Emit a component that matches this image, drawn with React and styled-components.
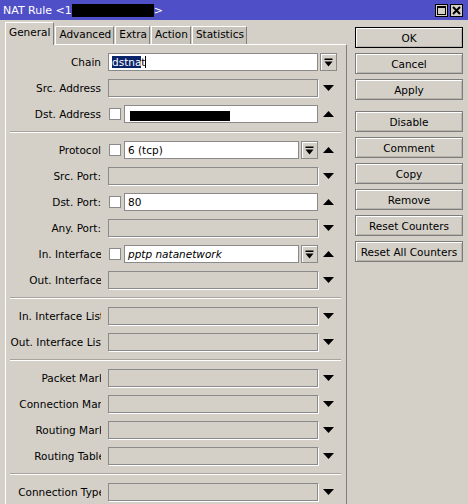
import React from "react";
import styled, { createGlobalStyle } from "styled-components";

const GlobalStyle = createGlobalStyle`
  html, body {
    margin: 0;
    padding: 0;
    background: #d4d0c8;
  }
  * {
    box-sizing: border-box;
  }
`;

const Window = styled.div`
  width: 468px;
  height: 504px;
  overflow: hidden;
  background: #d4d0c8;
  font-family: "DejaVu Sans", "Liberation Sans", sans-serif;
  font-size: 10.5px;
  color: #000;
  display: flex;
  flex-direction: column;
`;

const TitleBar = styled.div`
  height: 20px;
  flex: none;
  background: #4f4fc7;
  color: #fff;
  font-size: 11px;
  display: flex;
  align-items: center;
  padding: 0 4px 0 3px;
`;

const TitleText = styled.div`
  flex: 1;
  display: flex;
  align-items: center;
  white-space: nowrap;
`;

const Redact = styled.span`
  display: inline-block;
  background: #000;
  width: ${(p) => p.$w}px;
  height: ${(p) => p.$h}px;
`;

const TitleButtons = styled.div`
  display: flex;
  gap: 2px;
  margin-right: 1px;
`;

const TitleButton = styled.div`
  width: 13px;
  height: 13px;
  background: #d4d0c8;
  border: 1px solid #000;
  display: flex;
  align-items: center;
  justify-content: center;
`;

const Body = styled.div`
  flex: 1;
  display: flex;
  min-height: 0;
`;

const Left = styled.div`
  width: 347px;
  padding: 2px 0 0 5px;
  display: flex;
  flex-direction: column;
`;

const Tabs = styled.div`
  display: flex;
  align-items: flex-end;
  height: 22px;
  position: relative;
  z-index: 1;
`;

const Tab = styled.div`
  height: ${(p) => (p.$active ? 23 : 18)}px;
  margin-bottom: ${(p) => (p.$active ? -1 : 0)}px;
  padding: ${(p) => (p.$active ? "3px 3px 0 3px" : "1px 2px 0 3px")};
  background: ${(p) => (p.$active ? "#d4d0c8" : "#c8c4bc")};
  border-top: 1px solid #fff;
  border-left: 1px solid #fff;
  border-right: 1px solid #808080;
  margin-right: 1px;
  white-space: nowrap;
  display: flex;
  align-items: flex-start;
`;

const Panel = styled.div`
  flex: 1;
  border-top: 1px solid #fff;
  border-left: 1px solid #fff;
  border-right: 1px solid #808080;
  padding: 8px 5px 0 3px;
`;

const Row = styled.div`
  display: flex;
  align-items: center;
  height: 18px;
  margin-bottom: 8px;
`;

/* labels are right-aligned and clipped at the box edge, long ones run past it */
const Label = styled.div`
  width: 92px;
  margin-right: 7px;
  display: flex;
  justify-content: flex-end;
  overflow: hidden;
  white-space: nowrap;
`;

const LabelText = styled.span`
  flex: none;
  margin-right: ${(p) => -(p.$shift || 0)}px;
`;

const Field = styled.div`
  width: 210px;
  display: flex;
  align-items: center;
  height: 18px;
`;

const Check = styled.div`
  width: 12px;
  height: 12px;
  flex: none;
  margin: 0 3px 0 1px;
  background: #fff;
  border: 1px solid #8a8a8a;
`;

const Input = styled.div`
  flex: 1;
  height: 18px;
  background: ${(p) => (p.$disabled ? "#d4d0c8" : "#fff")};
  border: 1px solid #8a8a8a;
  box-shadow: ${(p) => (p.$disabled ? "1px 1px 0 #fff" : "none")};
  display: flex;
  align-items: center;
  padding-left: 3px;
  white-space: nowrap;
  overflow: hidden;
  font-style: ${(p) => (p.$italic ? "italic" : "normal")};
`;

const Selected = styled.span`
  background: #0a246a;
  color: #fff;
`;

const Caret = styled.span`
  display: inline-block;
  width: 1px;
  height: 12px;
  background: #000;
`;

const DropButton = styled.div`
  width: 17px;
  height: 18px;
  flex: none;
  margin-left: ${(p) => (p.$flush ? 0 : 2)}px;
  background: #d4d0c8;
  border: 1px solid #8a8a8a;
  box-shadow: inset 1px 1px 0 #fff;
  display: flex;
  align-items: center;
  justify-content: center;
`;

const Trail = styled.div`
  width: 20px;
  height: 18px;
  display: flex;
  align-items: center;
  justify-content: center;
`;

const Separator = styled.div`
  height: 2px;
  margin: 1px 0 8px 1px;
  width: 331px;
  border-top: 1px solid #a8a49c;
  border-bottom: 1px solid #fff;
`;

const Buttons = styled.div`
  flex: 1;
  padding: 7px 5px 0 8px;
  display: flex;
  flex-direction: column;
`;

const Button = styled.div`
  height: 21px;
  margin-bottom: 5px;
  margin-top: ${(p) => (p.$gap ? 6 : 0)}px;
  border: 1px solid ${(p) => (p.$default ? "#000" : "#7c7c7c")};
  box-shadow: inset 1px 1px 0 #fff, inset -1px -1px 0 #b8b4ac;
  background: #d4d0c8;
  display: flex;
  align-items: center;
  justify-content: center;
  white-space: nowrap;
`;

const Arrow = ({ up }) => (
  <svg width="11" height="6" viewBox="0 0 11 6">
    <polygon points={up ? "0,6 11,6 5.5,0" : "0,0 11,0 5.5,6"} fill="#000" />
  </svg>
);

const DropIcon = () => (
  <svg width="9" height="9" viewBox="0 0 9 9">
    <rect x="0.5" y="0.5" width="8" height="1.5" fill="#000" />
    <polygon points="0.5,3.5 8.5,3.5 4.5,8.5" fill="#000" />
  </svg>
);

const FieldRow = ({ label, shift, check, value, drop, trail, disabled, italic, children }) => (
  <Row>
    <Label>
      <LabelText $shift={shift}>{label}</LabelText>
    </Label>
    <Field>
      {check && <Check />}
      <Input $disabled={disabled} $italic={italic}>
        {children || value}
      </Input>
      {drop && (
        <DropButton>
          <DropIcon />
        </DropButton>
      )}
    </Field>
    <Trail>
      {trail === "drop" && (
        <DropButton $flush>
          <DropIcon />
        </DropButton>
      )}
      {trail === "up" && <Arrow up />}
      {trail === "down" && <Arrow />}
    </Trail>
  </Row>
);

const buttons = [
  { label: "OK", def: true },
  { label: "Cancel" },
  { label: "Apply" },
  { label: "Disable", gap: true },
  { label: "Comment" },
  { label: "Copy" },
  { label: "Remove" },
  { label: "Reset Counters" },
  { label: "Reset All Counters" },
];

const App = () => {
  return (
    <Window>
      <GlobalStyle />
      <TitleBar>
        <TitleText>
          NAT Rule &lt;1
          <Redact $w={82} $h={13} />
          &gt;
        </TitleText>
        <TitleButtons>
          <TitleButton>
            <svg width="9" height="9" viewBox="0 0 9 9">
              <rect x="0.5" y="0.5" width="8" height="8" fill="none" stroke="#000" />
              <rect x="0.5" y="0.5" width="8" height="1.5" fill="#000" />
            </svg>
          </TitleButton>
          <TitleButton>
            <svg width="9" height="9" viewBox="0 0 9 9">
              <path d="M1 1 L8 8 M8 1 L1 8" stroke="#000" strokeWidth="2" />
            </svg>
          </TitleButton>
        </TitleButtons>
      </TitleBar>
      <Body>
        <Left>
          <Tabs>
            <Tab $active>General</Tab>
            <Tab>Advanced</Tab>
            <Tab>Extra</Tab>
            <Tab>Action</Tab>
            <Tab>Statistics</Tab>
          </Tabs>
          <Panel>
            <FieldRow label="Chain" trail="drop">
              <Selected>dstna</Selected>
              t
              <Caret />
            </FieldRow>
            <FieldRow label="Src. Address" disabled trail="down" />
            <FieldRow label="Dst. Address" check trail="up">
              <Redact $w={100} $h={10} style={{ marginLeft: 2, marginTop: 4 }} />
            </FieldRow>
            <Separator />
            <FieldRow label="Protocol" check drop value="6 (tcp)" trail="up" />
            <FieldRow label="Src. Port:" disabled trail="down" />
            <FieldRow label="Dst. Port:" check value="80" trail="up" />
            <FieldRow label="Any. Port:" disabled trail="down" />
            <FieldRow label="In. Interface" shift={1} check drop italic value="pptp natanetwork" trail="up" />
            <FieldRow label="Out. Interface" shift={1} disabled trail="down" />
            <Separator />
            <FieldRow label="In. Interface List" shift={3} disabled trail="down" />
            <FieldRow label="Out. Interface List" shift={4} disabled trail="down" />
            <Separator />
            <FieldRow label="Packet Mark" shift={4} disabled trail="down" />
            <FieldRow label="Connection Mark" shift={7} disabled trail="down" />
            <FieldRow label="Routing Mark" shift={4} disabled trail="down" />
            <FieldRow label="Routing Table" shift={4} disabled trail="down" />
            <Separator />
            <FieldRow label="Connection Type" shift={4} disabled trail="down" />
          </Panel>
        </Left>
        <Buttons>
          {buttons.map((b) => (
            <Button key={b.label} $default={b.def} $gap={b.gap}>
              {b.label}
            </Button>
          ))}
        </Buttons>
      </Body>
    </Window>
  );
};

export default App;
